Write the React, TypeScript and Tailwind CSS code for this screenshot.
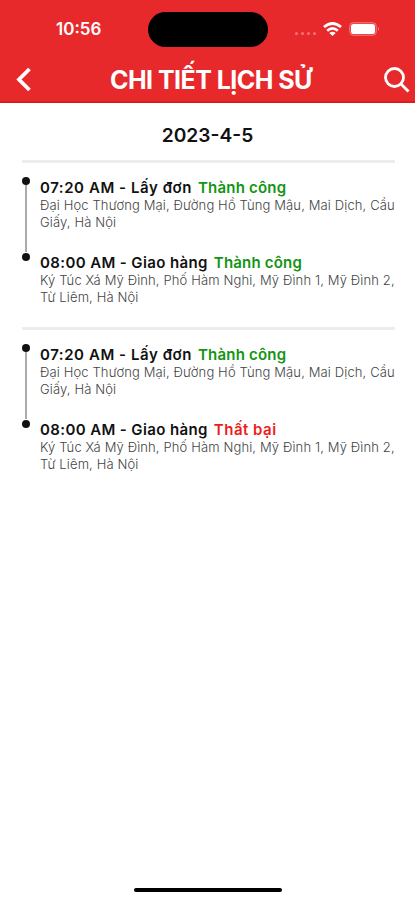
type Stop = {
  time: string;
  action: string;
  status: string;
  ok: boolean;
  address: [string, string];
  actionClass: string;
  statusClass: string;
};

const pickup: Stop = {
  time: '07:20 AM',
  action: 'Lấy đơn',
  status: 'Thành công',
  ok: true,
  address: ['Đại Học Thương Mại, Đường Hồ Tùng Mậu, Mai Dịch, Cầu', 'Giấy, Hà Nội'],
  actionClass: 'tracking-[0.56px]',
  statusClass: 'tracking-[0.2px]',
};

const delivery: Stop = {
  time: '08:00 AM',
  action: 'Giao hàng',
  status: 'Thành công',
  ok: true,
  address: ['Ký Túc Xá Mỹ Đình, Phố Hàm Nghi, Mỹ Đình 1, Mỹ Đình 2,', 'Từ Liêm, Hà Nội'],
  actionClass: 'tracking-[0.38px]',
  statusClass: 'tracking-[0.2px]',
};

const trips: Stop[][] = [
  [pickup, delivery],
  [pickup, { ...delivery, status: 'Thất bại', ok: false, statusClass: 'tracking-[0.5px]' }],
];

function StatusBar() {
  return (
    <div className="flex h-[58px] items-center">
      <span className="ml-[56px] w-[92px] text-[17px] font-semibold leading-none">10:56</span>
      <div className="h-[35px] w-[120px] rounded-full bg-black" />
      <div className="ml-[27px] mt-[9px] flex gap-[3px] opacity-35">
        <i className="size-[3px] rounded-full bg-white" />
        <i className="size-[3px] rounded-full bg-white" />
        <i className="size-[3px] rounded-full bg-white" />
        <i className="size-[3px] rounded-full bg-white" />
      </div>
      <svg className="ml-[7px] h-[14px] w-[19px]" viewBox="0 0 19 14" fill="none" stroke="white" strokeWidth="2.7">
        <path d="M1 5Q9.500-2 18 5" />
        <path d="M4.200 8.700Q9.500 4.200 14.800 8.700" />
        <path d="M6.300 11Q9.500 8.300 12.700 11L9.500 14Z" fill="white" stroke="none" />
      </svg>
      <svg className="ml-[7px] h-[14px] w-[31px]" viewBox="0 0 31 14">
        <rect x="0.500" y="0.500" width="27" height="13" rx="4" fill="white" fillOpacity=".15" stroke="white" strokeOpacity=".25" />
        <rect x="2" y="2" width="24" height="10" rx="2.800" fill="white" />
        <path d="M29 5Q31 7 29 9Z" fill="white" fillOpacity=".5" />
      </svg>
    </div>
  );
}

function StopRow({ stop, first }: { stop: Stop; first: boolean }) {
  return (
    <div className="flex h-[75px]">
      <div className="flex w-[18px] flex-col items-start">
        <i className={first ? 'size-[8px] shrink-0 rounded-full bg-[#111]' : 'mt-[1px] size-[8px] shrink-0 rounded-full bg-[#111]'} />
        {first && <i className="ml-[3px] h-[68px] w-[2px] bg-[#aaa]" />}
      </div>
      <div className="whitespace-nowrap pt-px">
        <div className="flex h-[20px] items-center text-[15px] font-semibold leading-[20px]">
          <span className={'text-[#111] ' + stop.actionClass}>{stop.time} - {stop.action}</span>
          <span className={(stop.ok ? 'ml-[6px] text-[#129512] ' : 'ml-[6px] text-[#ed1c1c] ') + stop.statusClass}>{stop.status}</span>
        </div>
        <div className="-mt-px text-[13px] font-light leading-[16.500px] tracking-[0.13px] text-[#444]">
          <p>{stop.address[0]}</p>
          <p>{stop.address[1]}</p>
        </div>
      </div>
    </div>
  );
}

export default function App() {
  return (
    <div className="flex h-[900px] w-[415px] flex-col overflow-hidden bg-white font-['Inter','Noto_Sans',sans-serif]">
      <header className="h-[103px] shrink-0 border-b-2 border-[#d91d1f] bg-[#e8292b] text-white">
        <StatusBar />
        <div className="flex h-[43px] items-center">
          <svg className="ml-[16px] h-[25px] w-[16px]" viewBox="0 0 16 25" fill="none" stroke="white" strokeWidth="3.800">
            <path d="M13.500 2L3 12.500L13.500 23" />
          </svg>
          <h1 className="ml-[78px] w-[274px] whitespace-nowrap text-[25px] font-bold leading-[40px] tracking-[-0.55px]">CHI TIẾT LỊCH SỬ</h1>
          <svg className="h-[26px] w-[26px] shrink-0" viewBox="0 0 26 26" fill="none" stroke="white" strokeWidth="2.800">
            <circle cx="10.500" cy="10.500" r="9" />
            <path d="M17 17L24.500 24.500" />
          </svg>
        </div>
      </header>
      <main className="grow pl-[22px] pr-[20px]">
        <h2 className="pr-[2px] pt-[18px] text-center text-[19.2px] font-semibold leading-[28px] text-[#111]">2023-4-5</h2>
        {trips.map((stops, index) => (
          <section key={index} className={index ? '' : 'mt-[11px]'}>
            <div className="h-[3px] bg-[#ededed]" />
            <div className="h-[164px] pt-[14px]">
              {stops.map((stop, i) => <StopRow key={i} stop={stop} first={i === 0} />)}
            </div>
          </section>
        ))}
      </main>
      <div className="mx-auto mb-[8px] h-[4px] w-[148px] shrink-0 rounded-full bg-black" />
    </div>
  );
}
